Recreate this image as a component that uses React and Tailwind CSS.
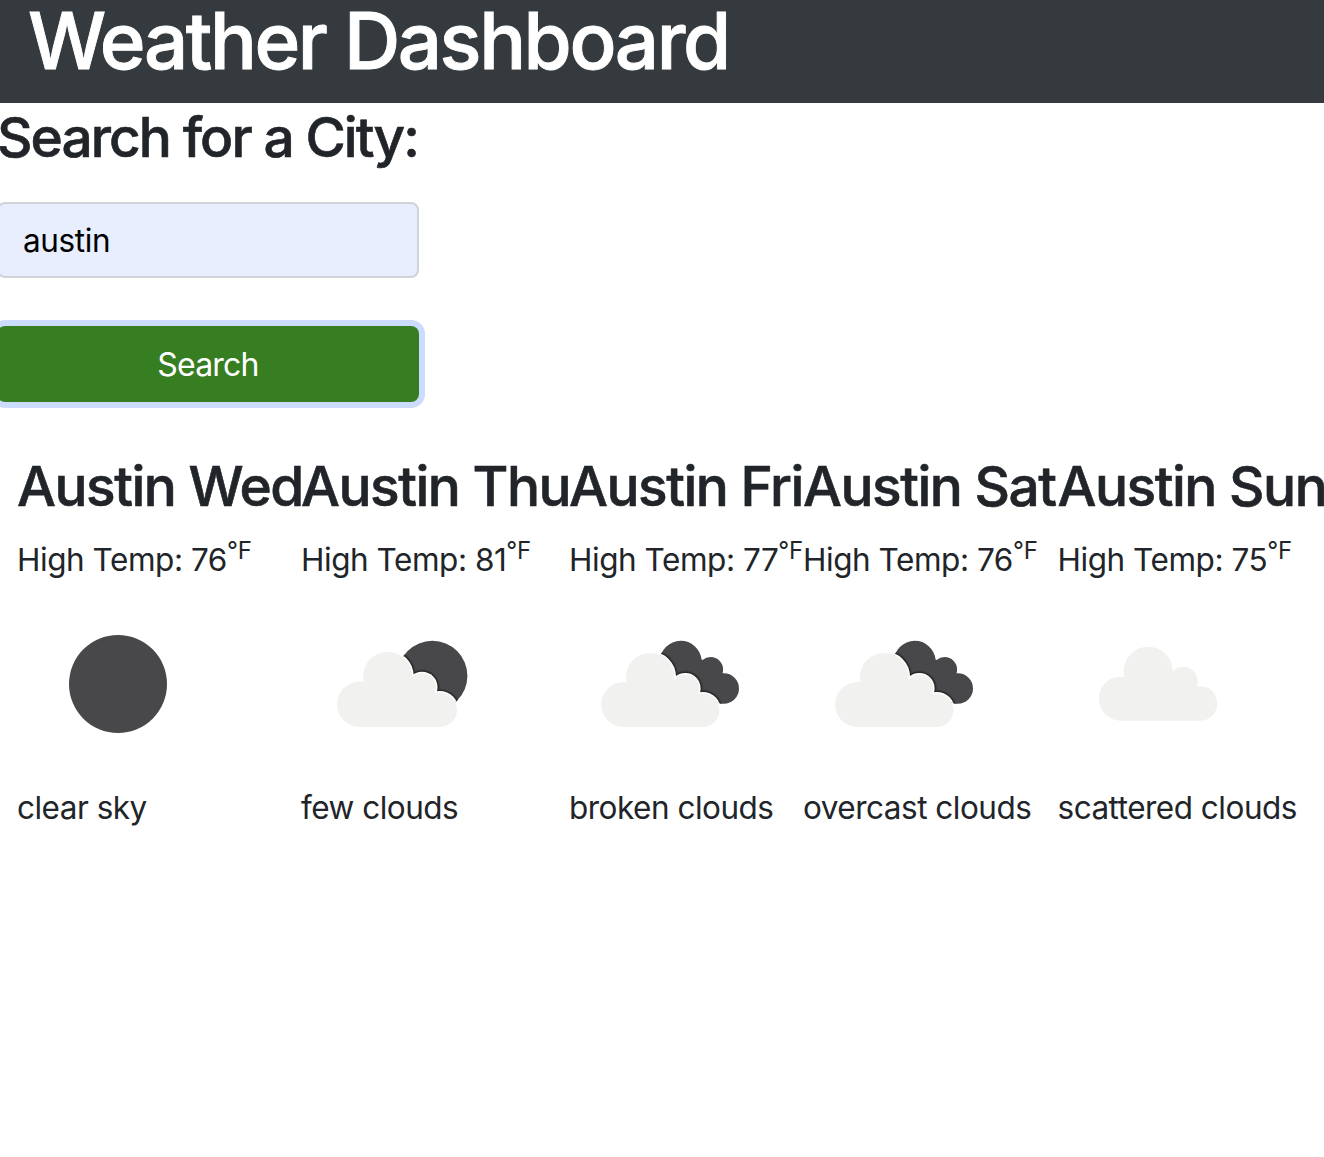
import React from "react";

function Cloud({ circles, bottom, grow = 0, color }) {
  const [left, big, small, right] = circles;
  return (
    <g fill={color}>
      {circles.map(([cx, cy, r]) => (
        <circle key={cx} cx={cx} cy={cy} r={r + grow} />
      ))}
      <path
        d={`M${left[0]} ${bottom}V${left[1]}L${big[0]} ${big[1]}L${small[0]} ${small[1]}L${right[0]} ${right[1]}V${bottom}Z`}
      />
    </g>
  );
}

const scattered = [[62.7, 114.7, 22], [90.2, 87.2, 24.5], [125.3, 97.1, 14.4], [142.1, 119.5, 17.2]];
const few = [[58.8, 120.2, 22.8], [86.7, 92.5, 24.6], [121, 103.2, 14], [138.8, 125.8, 17.2]];
const broken = [[54.6, 120.5, 22.5], [81.3, 93.2, 24.3], [116.3, 104.2, 13.8], [133.6, 126.2, 16.8]];

function Icon({ type, id }) {
  const front = type === "few" ? few : broken;
  return (
    <svg viewBox="0 0 200 200" className="block h-[200px] w-[200px]">
      {type === "clear" && <circle cx="101" cy="100" r="49" fill="#48484a" />}
      {type === "scattered" && <Cloud circles={scattered} bottom={136.7} color="#f1f1ef" />}
      {(type === "few" || type === "broken") && (
        <>
          <clipPath id={id}>
            {type === "few" ? (
              <circle cx="131.4" cy="91.8" r="35" />
            ) : (
              <>
                <circle cx="111.7" cy="77.8" r="21" />
                <circle cx="141.7" cy="85.4" r="12.4" />
                <circle cx="154.8" cy="104.5" r="15.2" />
                <path d="M100 78L132 75L153 90L154 119.7L140 117L105 96Z" />
              </>
            )}
          </clipPath>
          <g clipPath={`url(#${id})`}>
            <rect width="200" height="200" fill="#48484a" />
            <Cloud circles={front} bottom={143} grow={3.8} color="#3a3a3c" />
            <Cloud circles={front} bottom={143} grow={2.7} color="#29292b" />
            <Cloud circles={front} bottom={143} grow={1.5} color="#ffffff" />
          </g>
          <Cloud circles={front} bottom={143} color="#f1f1ef" />
        </>
      )}
    </svg>
  );
}

const days = [
  { day: "Wed", temp: 76, icon: "clear", text: "clear sky", width: "w-[284px]" },
  { day: "Thu", temp: 81, icon: "few", text: "few clouds", width: "w-[268px]" },
  { day: "Fri", temp: 77, icon: "broken", text: "broken clouds", width: "w-[234px]" },
  { day: "Sat", temp: 76, icon: "broken", text: "overcast clouds", width: "w-[254.5px]" },
  { day: "Sun", temp: 75, icon: "scattered", text: "scattered clouds", width: "w-[268px]" },
];

export default function App() {
  return (
    <div className="h-[1157px] w-[1324px] overflow-hidden bg-white font-['Inter',sans-serif] text-[#212529]">
      <header className="h-[103px] bg-[#353a3e] pl-[28px]">
        <h1 className="whitespace-nowrap text-[78px] leading-[82px] font-medium tracking-[-2.45px] text-white [-webkit-text-stroke:0.9px_currentColor]">
          Weather Dashboard
        </h1>
      </header>
      <section className="w-[419px]">
        <h2 className="-ml-[3px] whitespace-nowrap pt-0.5 text-[55px] leading-[64px] font-medium tracking-[-1.95px] [-webkit-text-stroke:0.6px_currentColor]">
          Search for a City:
        </h2>
        <input
          defaultValue="austin"
          className="mt-[33px] -ml-[3px] block h-[76px] w-[422px] rounded-lg border-2 border-[#ced4da] bg-[#e8eefd] pl-6 text-[31.5px] tracking-[-0.4px] text-black outline-none"
        />
        <button className="mt-12 -ml-[3px] block h-[76px] w-[422px] rounded-lg bg-[#377d22] pt-0.5 text-[32px] tracking-[-0.8px] text-white shadow-[0_0_0_6px_#ccdcfe]">
          Search
        </button>
      </section>
      <section className="mt-[52px] flex pl-[17px]">
        {days.map((d) => (
          <article key={d.day} className={`flex-none whitespace-nowrap ${d.width}`}>
            <h2 className="text-[55px] leading-[64px] font-medium tracking-[-1.5px] [-webkit-text-stroke:0.6px_currentColor]">
              Austin {d.day}
            </h2>
            <p className="mt-[18px] text-[31.5px] leading-12 tracking-[-0.45px]">
              High Temp: {d.temp}
              <sup className="text-[24px] tracking-[-0.2px]">°F</sup>
            </p>
            <Icon type={d.icon} id={`behind-${d.day}`} />
            <p className="text-[31.5px] leading-12 tracking-[-0.5px]">{d.text}</p>
          </article>
        ))}
      </section>
    </div>
  );
}
